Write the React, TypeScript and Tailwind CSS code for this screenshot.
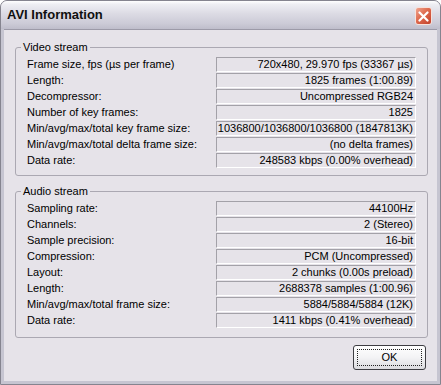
const videoRows: [string, string][] = [
  ['Frame size, fps (µs per frame)', '720x480, 29.970 fps (33367 µs)'],
  ['Length:', '1825 frames (1:00.89)'],
  ['Decompressor:', 'Uncompressed RGB24'],
  ['Number of key frames:', '1825'],
  ['Min/avg/max/total key frame size:', '1036800/1036800/1036800 (1847813K)'],
  ['Min/avg/max/total delta frame size:', '(no delta frames)'],
  ['Data rate:', '248583 kbps (0.00% overhead)'],
];

const audioRows: [string, string][] = [
  ['Sampling rate:', '44100Hz'],
  ['Channels:', '2 (Stereo)'],
  ['Sample precision:', '16-bit'],
  ['Compression:', 'PCM (Uncompressed)'],
  ['Layout:', '2 chunks (0.00s preload)'],
  ['Length:', '2688378 samples (1:00.96)'],
  ['Min/avg/max/total frame size:', '5884/5884/5884 (12K)'],
  ['Data rate:', '1411 kbps (0.41% overhead)'],
];

const Group = ({ title, rows, className }: { title: string; rows: [string, string][]; className?: string }) => {
  return (
    <fieldset className={`w-[413px] rounded-[3px] border border-[#aba8b2] pt-[3px] ${className ?? ''}`}>
      <legend className="ml-[5px] px-[2px] leading-[14px]">{title}</legend>
      <div className="ml-[11px] grid grid-cols-[189px_200px] gap-y-px">
        {rows.map(([label, value], idx) => (
          <div key={idx} className="contents">
            <div className="flex h-[15px] items-center whitespace-nowrap">{label}</div>
            <div className="flex h-[15px] items-center justify-end whitespace-nowrap border border-t-[#a3a1a8] border-l-[#a3a1a8] border-r-white border-b-white pr-[2px]">
              {value}
            </div>
          </div>
        ))}
      </div>
    </fieldset>
  );
};

export default function App() {
  return (
    <div className="flex h-[385px] w-[441px] flex-col overflow-hidden rounded-t-[7px] border border-[#85848f] bg-[#c6c5d1] font-['Liberation_Sans',Arial,sans-serif] text-[11px] text-black">
      <div className="relative flex h-[28px] shrink-0 items-center bg-[linear-gradient(to_bottom,#ffffff_0%,#eeeef3_12%,#dcdbe4_45%,#cccbd7_80%,#bebdcb_100%)] pl-[6px]">
        <span className="text-[13px] font-bold text-[#101010]">AVI Information</span>
        <div className="absolute right-[8px] top-[6px] flex h-[18px] w-[17px] items-center justify-center rounded-[3px] border border-[#f6e2dc] bg-[linear-gradient(135deg,#f0a48e_0%,#de6a4e_45%,#c2402a_100%)]">
          <svg width="11" height="11" viewBox="0 0 11 11">
            <path d="M1.5 1.5 L9.5 9.5 M9.5 1.5 L1.5 9.5" stroke="white" strokeWidth="2.2" strokeLinecap="round" />
          </svg>
        </div>
      </div>
      <div className="mx-[3px] mb-[3px] flex flex-1 flex-col border-t border-[#9c9aa8] bg-[#e6e3e9] pl-[11px] pt-[10px]">
        <Group title="Video stream" rows={videoRows} className="pb-[7px]" />
        <Group title="Audio stream" rows={audioRows} className="mt-[8px] pb-[9px]" />
        <div className="mt-[7px] flex w-[413px] justify-end">
          <button className="mr-[2px] flex h-[25px] w-[73px] items-center justify-center rounded-[3px] border border-[#3d3d42] bg-[linear-gradient(to_bottom,#ffffff_0%,#f3f3f5_50%,#dcdce0_100%)] p-[3px]">
            <span className="flex h-full w-full items-center justify-center border border-dotted border-[#222]">OK</span>
          </button>
        </div>
      </div>
    </div>
  );
}
